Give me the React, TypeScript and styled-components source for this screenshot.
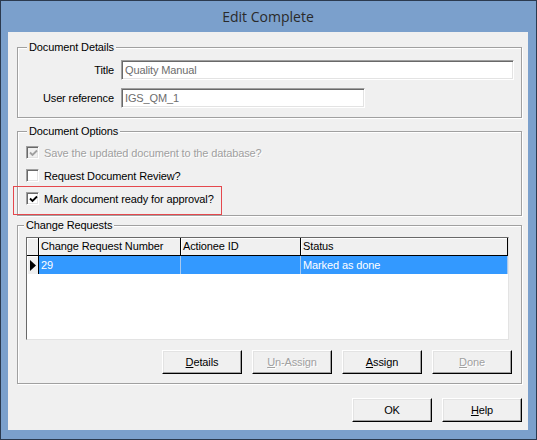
import { ReactNode } from 'react'
import styled, { createGlobalStyle } from 'styled-components'

const GlobalStyle = createGlobalStyle`
  body {
    margin: 0;
    font-family: "Liberation Sans", Arial, sans-serif;
    font-size: 11px;
    letter-spacing: -0.12px;
    color: #000;
  }
`

interface CheckProps {
  checked?: boolean
  disabled?: boolean
  highlighted?: boolean
  children: ReactNode
}

function CheckOption({ checked, disabled, highlighted, children }: CheckProps) {
  return (
    <CheckRow $disabled={disabled}>
      <Box $disabled={disabled}>
        {checked && (
          <svg width="9" height="9" viewBox="0 0 9 9">
            <path d="M1 3.5 L3.5 6 L8 1.5" fill="none" stroke={disabled ? '#a0a0a0' : '#000'} strokeWidth="1.8" />
          </svg>
        )}
      </Box>
      <span>{children}</span>
      {highlighted && <Highlight />}
    </CheckRow>
  )
}

export default function App() {
  return (
    <>
      <GlobalStyle />
      <Window>
        <TitleBar>Edit Complete</TitleBar>
        <Client>
          <Group $gap={13}>
            <Caption $offset={9}>Document Details</Caption>
            <FormGrid>
              <FieldLabel>Title</FieldLabel>
              <TextBox>Quality Manual</TextBox>
              <FieldLabel>User reference</FieldLabel>
              <TextBox $width={244}>IGS_QM_1</TextBox>
            </FormGrid>
          </Group>

          <Group $gap={9}>
            <Caption $offset={9}>Document Options</Caption>
            <Options>
              <CheckOption checked disabled>Save the updated document to the database?</CheckOption>
              <CheckOption>Request Document Review?</CheckOption>
              <CheckOption checked highlighted>Mark document ready for approval?</CheckOption>
            </Options>
          </Group>

          <Group $gap={0}>
            <Caption $offset={6}>Change Requests</Caption>
            <RequestsBody>
              <Grid>
                <GridRow>
                  <HeaderCell />
                  <HeaderCell>Change Request Number</HeaderCell>
                  <HeaderCell>Actionee ID</HeaderCell>
                  <HeaderCell>Status</HeaderCell>
                </GridRow>
                <GridRow>
                  <SelectorCell>
                    <svg width="6" height="11" viewBox="0 0 6 11">
                      <polygon points="0,0 6,5.5 0,11" fill="#000" />
                    </svg>
                  </SelectorCell>
                  <DataCell>29</DataCell>
                  <DataCell />
                  <DataCell>Marked as done</DataCell>
                </GridRow>
              </Grid>
              <ButtonRow>
                <Button><u>D</u>etails</Button>
                <Button $disabled><u>U</u>n-Assign</Button>
                <Button><u>A</u>ssign</Button>
                <Button $disabled><u>D</u>one</Button>
              </ButtonRow>
            </RequestsBody>
          </Group>

          <Footer>
            <Button>OK</Button>
            <Button><u>H</u>elp</Button>
          </Footer>
        </Client>
      </Window>
    </>
  )
}

const Window = styled.div`
  width: 537px;
  height: 440px;
  box-sizing: border-box;
  border: 1px solid #2b3a4f;
  background: #7ba0cc;
  padding: 0 8px 9px 7px;
  display: flex;
  flex-direction: column;
`

const TitleBar = styled.div`
  height: 31px;
  display: flex;
  align-items: center;
  justify-content: center;
  font-family: "Open Sans", "Noto Sans", sans-serif;
  font-size: 14px;
  letter-spacing: 0;
  color: #2a2a2a;
`

const Client = styled.div`
  flex: 1;
  background: #f0f0f0;
  padding: 15px 6px 0 9px;
  display: flex;
  flex-direction: column;
`

const Group = styled.div<{ $gap: number }>`
  position: relative;
  border: 1px solid #a0a0a0;
  box-shadow: 1px 1px 0 #fff, inset 1px 1px 0 #fff;
  margin-bottom: ${({ $gap }) => $gap}px;
`

const Caption = styled.div<{ $offset: number }>`
  position: absolute;
  top: -7px;
  left: ${({ $offset }) => $offset}px;
  padding: 0 2px;
  line-height: 13px;
  background: #f0f0f0;
`

const FormGrid = styled.div`
  display: grid;
  grid-template-columns: 96px 1fr;
  column-gap: 7px;
  row-gap: 8px;
  align-items: center;
  padding: 12px 7px 9px 0;
`

const FieldLabel = styled.div`
  text-align: right;
`

const TextBox = styled.div<{ $width?: number }>`
  width: ${({ $width }) => ($width ? `${$width}px` : '100%')};
  height: 20px;
  box-sizing: border-box;
  background: #fff;
  border: 1px solid;
  border-color: #a0a0a0 #fff #fff #a0a0a0;
  box-shadow: inset 1px 1px 0 #696969, inset -1px -1px 0 #e3e3e3;
  color: #6d6d6d;
  padding-left: 3px;
  line-height: 18px;
`

const Options = styled.div`
  display: flex;
  flex-direction: column;
  gap: 10px;
  padding: 14px 0 10px 8px;
`

const CheckRow = styled.div<{ $disabled?: boolean }>`
  position: relative;
  display: flex;
  align-items: center;
  gap: 5px;
  height: 13px;
  color: ${({ $disabled }) => ($disabled ? '#a0a0a0' : '#000')};
  text-shadow: ${({ $disabled }) => ($disabled ? '1px 1px 0 #fff' : 'none')};
`

const Box = styled.div<{ $disabled?: boolean }>`
  width: 13px;
  height: 13px;
  box-sizing: border-box;
  border: 1px solid;
  border-color: #a0a0a0 #fff #fff #a0a0a0;
  box-shadow: inset 1px 1px 0 #696969, inset -1px -1px 0 #e3e3e3;
  background: ${({ $disabled }) => ($disabled ? '#f0f0f0' : '#fff')};
  display: flex;
  align-items: center;
  justify-content: center;
  padding: 1px 0 0 1px;
`

const Highlight = styled.div`
  position: absolute;
  left: -13px;
  top: -6px;
  width: 209px;
  height: 29px;
  box-sizing: border-box;
  border: 1px solid #e5484d;
  pointer-events: none;
`

const RequestsBody = styled.div`
  display: flex;
  flex-direction: column;
  padding: 11px 9px 9px 8px;
`

const Grid = styled.div`
  width: 483px;
  height: 103px;
  box-sizing: border-box;
  background: #fff;
  border: 1px solid;
  border-color: #696969 #e3e3e3 #e3e3e3 #696969;
`

const GridRow = styled.div`
  display: grid;
  grid-template-columns: 12px 142px 120px 207px;
  height: 18px;
`

const HeaderCell = styled.div`
  box-sizing: border-box;
  background: #f0f0f0;
  border-right: 1px solid #000;
  border-bottom: 1px solid #000;
  box-shadow: inset 1px 1px 0 #fff;
  padding-left: 2px;
  line-height: 17px;
  white-space: nowrap;
  overflow: hidden;
`

const SelectorCell = styled.div`
  box-sizing: border-box;
  background: #f0f0f0;
  border-right: 1px solid #000;
  box-shadow: inset 1px 1px 0 #fff;
  display: flex;
  align-items: center;
  justify-content: center;
`

const DataCell = styled.div`
  box-sizing: border-box;
  background: #3399ff;
  color: #fff;
  border-right: 1px solid #a9c9ee;
  padding-left: 2px;
  line-height: 18px;
  white-space: nowrap;
`

const ButtonRow = styled.div`
  display: flex;
  justify-content: flex-end;
  gap: 10px;
  margin-top: 10px;
`

const Button = styled.div<{ $disabled?: boolean }>`
  width: 80px;
  height: 24px;
  box-sizing: border-box;
  background: #f0f0f0;
  border: 1px solid;
  border-color: #fff #000 #000 #fff;
  box-shadow: inset -1px -1px 0 #a0a0a0, inset 1px 1px 0 #e3e3e3;
  display: flex;
  align-items: center;
  justify-content: center;
  color: ${({ $disabled }) => ($disabled ? '#a0a0a0' : '#000')};
  text-shadow: ${({ $disabled }) => ($disabled ? '1px 1px 0 #fff' : 'none')};
`

const Footer = styled.div`
  display: flex;
  justify-content: flex-end;
  gap: 10px;
  margin-top: 14px;
`
